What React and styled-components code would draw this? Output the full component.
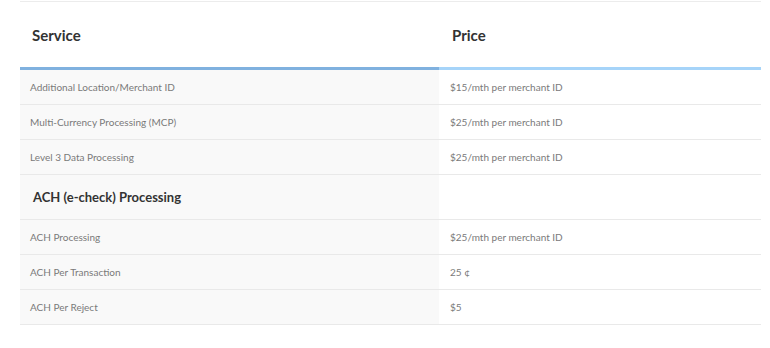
import React from "react";
import styled, { createGlobalStyle } from "styled-components";

const Global = createGlobalStyle`
  html, body { margin: 0; padding: 0; background: #fff; }
  body { font-family: Lato, "Open Sans", sans-serif; }
`;

const Wrap = styled.div`
  padding: 1px 9px 0 20px;
`;

const Table = styled.table`
  width: 741px;
  border-collapse: collapse;
  border-top: 1px solid #ececec;
  table-layout: fixed;
`;

const HeadCell = styled.th`
  height: 65px;
  padding: 0 0 0 ${(p) => (p.$first ? "12px" : "13px")};
  text-align: left;
  vertical-align: middle;
  font-size: 15px;
  font-weight: 700;
  color: #333;
  border-bottom: 3px solid ${(p) => (p.$first ? "#80b1df" : "#a6d4f9")};
  background: #fff;
`;

const Row = styled.tr`
  border-bottom: 1px solid #e9e9e9;
`;

const Cell = styled.td`
  height: ${(p) => (p.$section ? "44px" : "34px")};
  padding: 0 0 0 ${(p) => (p.$first ? (p.$section ? "13px" : "10px") : "11px")};
  vertical-align: middle;
  background: ${(p) => (p.$first ? "#f9f9f9" : "#fff")};
  font-size: ${(p) => (p.$section ? "13px" : "10px")};
  font-weight: ${(p) => (p.$section ? 700 : 400)};
  color: ${(p) => (p.$section ? "#333" : "#7a7a7a")};
`;

const rows = [
  ["Additional Location/Merchant ID", "$15/mth per merchant ID"],
  ["Multi-Currency Processing (MCP)", "$25/mth per merchant ID"],
  ["Level 3 Data Processing", "$25/mth per merchant ID"],
  ["ACH (e-check) Processing", "", true],
  ["ACH Processing", "$25/mth per merchant ID"],
  ["ACH Per Transaction", "25 ¢"],
  ["ACH Per Reject", "$5"],
];

export default function App() {
  return (
    <>
      <Global />
      <Wrap>
        <Table>
          <colgroup>
            <col style={{ width: "419px" }} />
            <col />
          </colgroup>
          <thead>
            <tr>
              <HeadCell $first>Service</HeadCell>
              <HeadCell>Price</HeadCell>
            </tr>
          </thead>
          <tbody>
            {rows.map(([s, p, sec], i) => (
              <Row key={i}>
                <Cell $first $section={sec}>{s}</Cell>
                <Cell $section={sec}>{p}</Cell>
              </Row>
            ))}
          </tbody>
        </Table>
      </Wrap>
    </>
  );
}
